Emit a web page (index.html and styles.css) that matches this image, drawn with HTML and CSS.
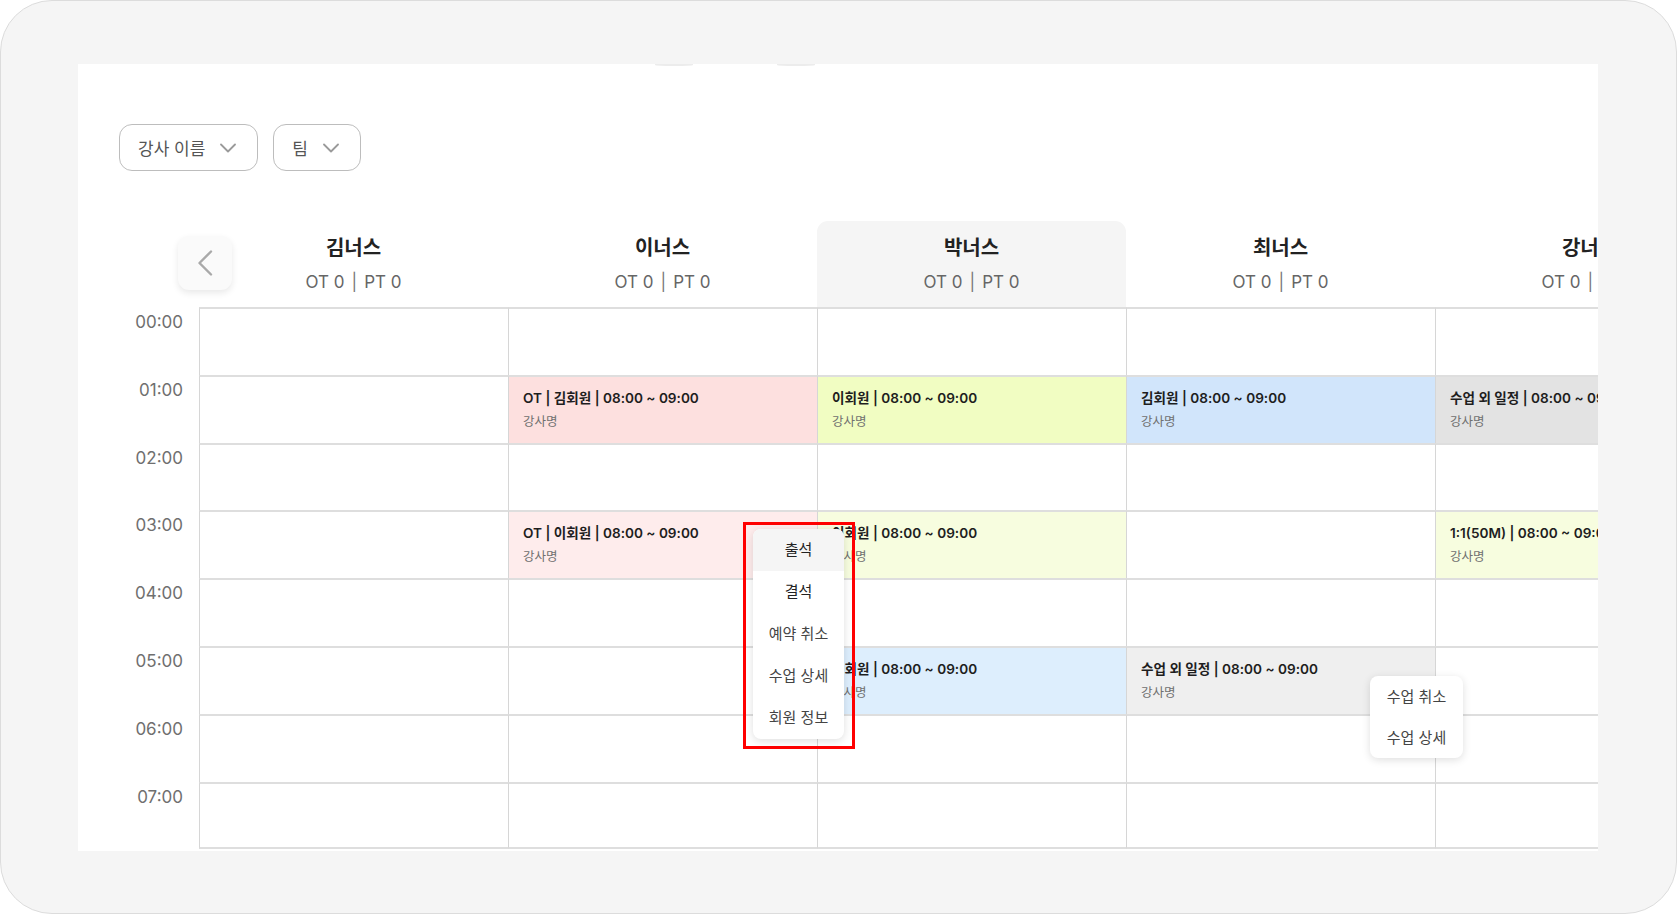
FILE: index.html
```html
<!DOCTYPE html>
<html>

<head lang="ko">
    <meta charset="UTF-8">
    <title>스케줄</title>
    <link rel="stylesheet" href="styles.css">
</head>

<body>

    <div class="frame">
        <div class="panel">
            <!--상단 탭 그림자-->
            <i class="tab-shade s1"></i>
            <i class="tab-shade s2"></i>

            <!--필터-->
            <div class="filters">
                <button class="select">강사 이름
                    <svg width="16" height="10" viewBox="0 0 16 10"><path d="M1 1.5 L8 8.5 L15 1.5" /></svg>
                </button>
                <button class="select">팀
                    <svg width="16" height="10" viewBox="0 0 16 10"><path d="M1 1.5 L8 8.5 L15 1.5" /></svg>
                </button>
            </div>

            <!--스케줄 표-->
            <div class="schedule">
                <div class="head">
                    <div class="head-nav">
                        <button class="prev">
                            <svg width="16" height="26" viewBox="0 0 16 26"><path d="M14 1.5 L2.5 13 L14 24.5" /></svg>
                        </button>
                    </div>
                    <div class="coach"><b>김너스</b><span>OT 0<i>|</i>PT 0</span></div>
                    <div class="coach"><b>이너스</b><span>OT 0<i>|</i>PT 0</span></div>
                    <div class="coach today"><b>박너스</b><span>OT 0<i>|</i>PT 0</span></div>
                    <div class="coach"><b>최너스</b><span>OT 0<i>|</i>PT 0</span></div>
                    <div class="coach"><b>강너스</b><span>OT 0<i>|</i>PT 0</span></div>
                </div>

                <div class="row">
                    <div class="time">00:00</div>
                    <div class="cell"></div>
                    <div class="cell"></div>
                    <div class="cell"></div>
                    <div class="cell"></div>
                    <div class="cell"></div>
                </div>
                <div class="row">
                    <div class="time">01:00</div>
                    <div class="cell"></div>
                    <div class="cell ev pink"><b>OT | 김회원 | 08:00 ~ 09:00</b><span>강사명</span></div>
                    <div class="cell ev lime"><b>이회원 | 08:00 ~ 09:00</b><span>강사명</span></div>
                    <div class="cell ev blue"><b>김회원 | 08:00 ~ 09:00</b><span>강사명</span></div>
                    <div class="cell ev gray"><b>수업 외 일정 | 08:00 ~ 09:00</b><span>강사명</span></div>
                </div>
                <div class="row">
                    <div class="time">02:00</div>
                    <div class="cell"></div>
                    <div class="cell"></div>
                    <div class="cell"></div>
                    <div class="cell"></div>
                    <div class="cell"></div>
                </div>
                <div class="row">
                    <div class="time">03:00</div>
                    <div class="cell"></div>
                    <div class="cell ev pink light"><b>OT | 이회원 | 08:00 ~ 09:00</b><span>강사명</span></div>
                    <div class="cell ev lime light"><b>이회원 | 08:00 ~ 09:00</b><span>강사명</span></div>
                    <div class="cell"></div>
                    <div class="cell ev lime light"><b>1:1(50M) | 08:00 ~ 09:00</b><span>강사명</span></div>
                </div>
                <div class="row">
                    <div class="time">04:00</div>
                    <div class="cell"></div>
                    <div class="cell"></div>
                    <div class="cell"></div>
                    <div class="cell"></div>
                    <div class="cell"></div>
                </div>
                <div class="row">
                    <div class="time">05:00</div>
                    <div class="cell"></div>
                    <div class="cell"></div>
                    <div class="cell ev blue light"><b>김회원 | 08:00 ~ 09:00</b><span>강사명</span></div>
                    <div class="cell ev gray light"><b>수업 외 일정 | 08:00 ~ 09:00</b><span>강사명</span></div>
                    <div class="cell"></div>
                </div>
                <div class="row">
                    <div class="time">06:00</div>
                    <div class="cell"></div>
                    <div class="cell"></div>
                    <div class="cell"></div>
                    <div class="cell"></div>
                    <div class="cell"></div>
                </div>
                <div class="row">
                    <div class="time">07:00</div>
                    <div class="cell"></div>
                    <div class="cell"></div>
                    <div class="cell"></div>
                    <div class="cell"></div>
                    <div class="cell"></div>
                </div>
            </div>

            <!--수업 메뉴 (표시 영역)-->
            <div class="mark">
                <ul class="menu">
                    <li class="on strong">출석</li>
                    <li class="strong">결석</li>
                    <li>예약 취소</li>
                    <li>수업 상세</li>
                    <li>회원 정보</li>
                </ul>
            </div>

            <!--수업 외 일정 메뉴-->
            <ul class="menu menu-etc">
                <li>수업 취소</li>
                <li>수업 상세</li>
            </ul>
        </div>
    </div>

</body>

</html>
```

FILE: styles.css
```css
* {
    padding: 0;
    margin: 0;
    box-sizing: border-box;
}

body {
    background: #fff;
    font-family: "Inter", "Noto Sans CJK KR", sans-serif;
    color: #222;
}

.frame {
    width: 1677px;
    height: 914px;
    border: 1px solid #dcdcdc;
    border-radius: 52px;
    background: #f5f5f5;
    padding: 63px 0 0 77px;
    overflow: hidden;
}

.panel {
    position: relative;
    width: 1520px;
    height: 787px;
    background: #fff;
    overflow: hidden;
}

.tab-shade {
    position: absolute;
    top: 0;
    width: 38px;
    height: 2px;
    border-radius: 0 0 50% 50%;
    background: #ececec;
}

.tab-shade.s1 {
    left: 577px;
}

.tab-shade.s2 {
    left: 699px;
}

/* 필터 */
.filters {
    display: flex;
    gap: 15px;
    padding: 60px 0 0 41px;
}

.select {
    display: flex;
    align-items: center;
    gap: 15px;
    height: 47px;
    padding: 0 21px 0 18px;
    border: 1px solid #bdbdbd;
    border-radius: 13px;
    background: #fff;
    font: 17px "Inter", "Noto Sans CJK KR", sans-serif;
    color: #555;
}

.select svg path {
    fill: none;
    stroke: #9a9a9a;
    stroke-width: 1.8;
    stroke-linecap: round;
    stroke-linejoin: round;
}

/* 스케줄 */
.schedule {
    margin-top: 50px;
}

.head,
.row {
    display: grid;
    grid-template-columns: 121px repeat(5, 309px);
}

.head {
    position: relative;
    height: 86px;
}

.head-nav {
    position: relative;
}

.prev {
    position: absolute;
    left: 100px;
    top: 15px;
    width: 54px;
    height: 54px;
    border: 0;
    border-radius: 11px;
    background: #fafafa;
    box-shadow: 0 3px 7px rgba(0, 0, 0, 0.09);
    display: flex;
    align-items: center;
    justify-content: center;
    z-index: 2;
}

.prev svg path {
    fill: none;
    stroke: #a9a9a9;
    stroke-width: 2.4;
    stroke-linecap: round;
    stroke-linejoin: round;
}

.coach {
    display: flex;
    flex-direction: column;
    align-items: center;
    padding-top: 15px;
}

.coach.today {
    background: #f5f5f5;
    border-radius: 11px 11px 0 0;
}

.coach b {
    font-size: 20px;
    line-height: 25px;
    font-weight: 700;
    color: #222;
}

.coach span {
    margin-top: 10px;
    font-size: 17px;
    line-height: 22px;
    color: #666;
    white-space: nowrap;
}

.coach span i {
    font-style: normal;
    margin: 0 7px;
    color: #777;
}

.row {
    height: 67.8px;
}

.time {
    padding: 4px 16px 0 0;
    text-align: right;
    font-size: 17px;
    line-height: 22px;
    color: #6f6f6f;
}

.cell {
    border-top: 2px solid #dedede;
    border-left: 1px solid #d6d6d6;
}

.row:last-child .cell {
    border-bottom: 2px solid #dedede;
}

.ev {
    display: flex;
    flex-direction: column;
    padding: 12px 0 0 14px;
    white-space: nowrap;
    overflow: hidden;
}

.ev b {
    font-size: 13.6px;
    line-height: 18px;
    font-weight: 600;
    color: #1e1e1e;
}

.ev span {
    margin-top: 6px;
    font-size: 12.5px;
    line-height: 17px;
    color: #707070;
}

.pink {
    background: #fde0df;
}

.pink.light {
    background: #feecec;
}

.lime {
    background: #f1fdc2;
}

.lime.light {
    background: #f7fddf;
}

.blue {
    background: #d1e5fb;
}

.blue.light {
    background: #ddeefd;
}

.gray {
    background: #e3e3e3;
}

.gray.light {
    background: #efefef;
}

/* 메뉴 */
.mark {
    position: absolute;
    left: 665px;
    top: 458px;
    width: 112px;
    height: 227px;
    border: 3px solid #ff0000;
    padding: 4px 0 0 7px;
    z-index: 3;
}

.menu {
    list-style: none;
    width: 91px;
    background: #fff;
    border-radius: 8px;
    box-shadow: 0 2px 9px rgba(0, 0, 0, 0.13);
    overflow: hidden;
}

.menu li {
    height: 42px;
    line-height: 42px;
    text-align: center;
    font-size: 15px;
    color: #444;
    white-space: nowrap;
}

.menu li.strong {
    color: #222;
}

.menu li.on {
    background: #f5f5f5;
}

.menu-etc {
    position: absolute;
    left: 1292px;
    top: 612px;
    width: 93px;
    z-index: 3;
}

.menu-etc li {
    height: 41px;
    line-height: 41px;
}
```
